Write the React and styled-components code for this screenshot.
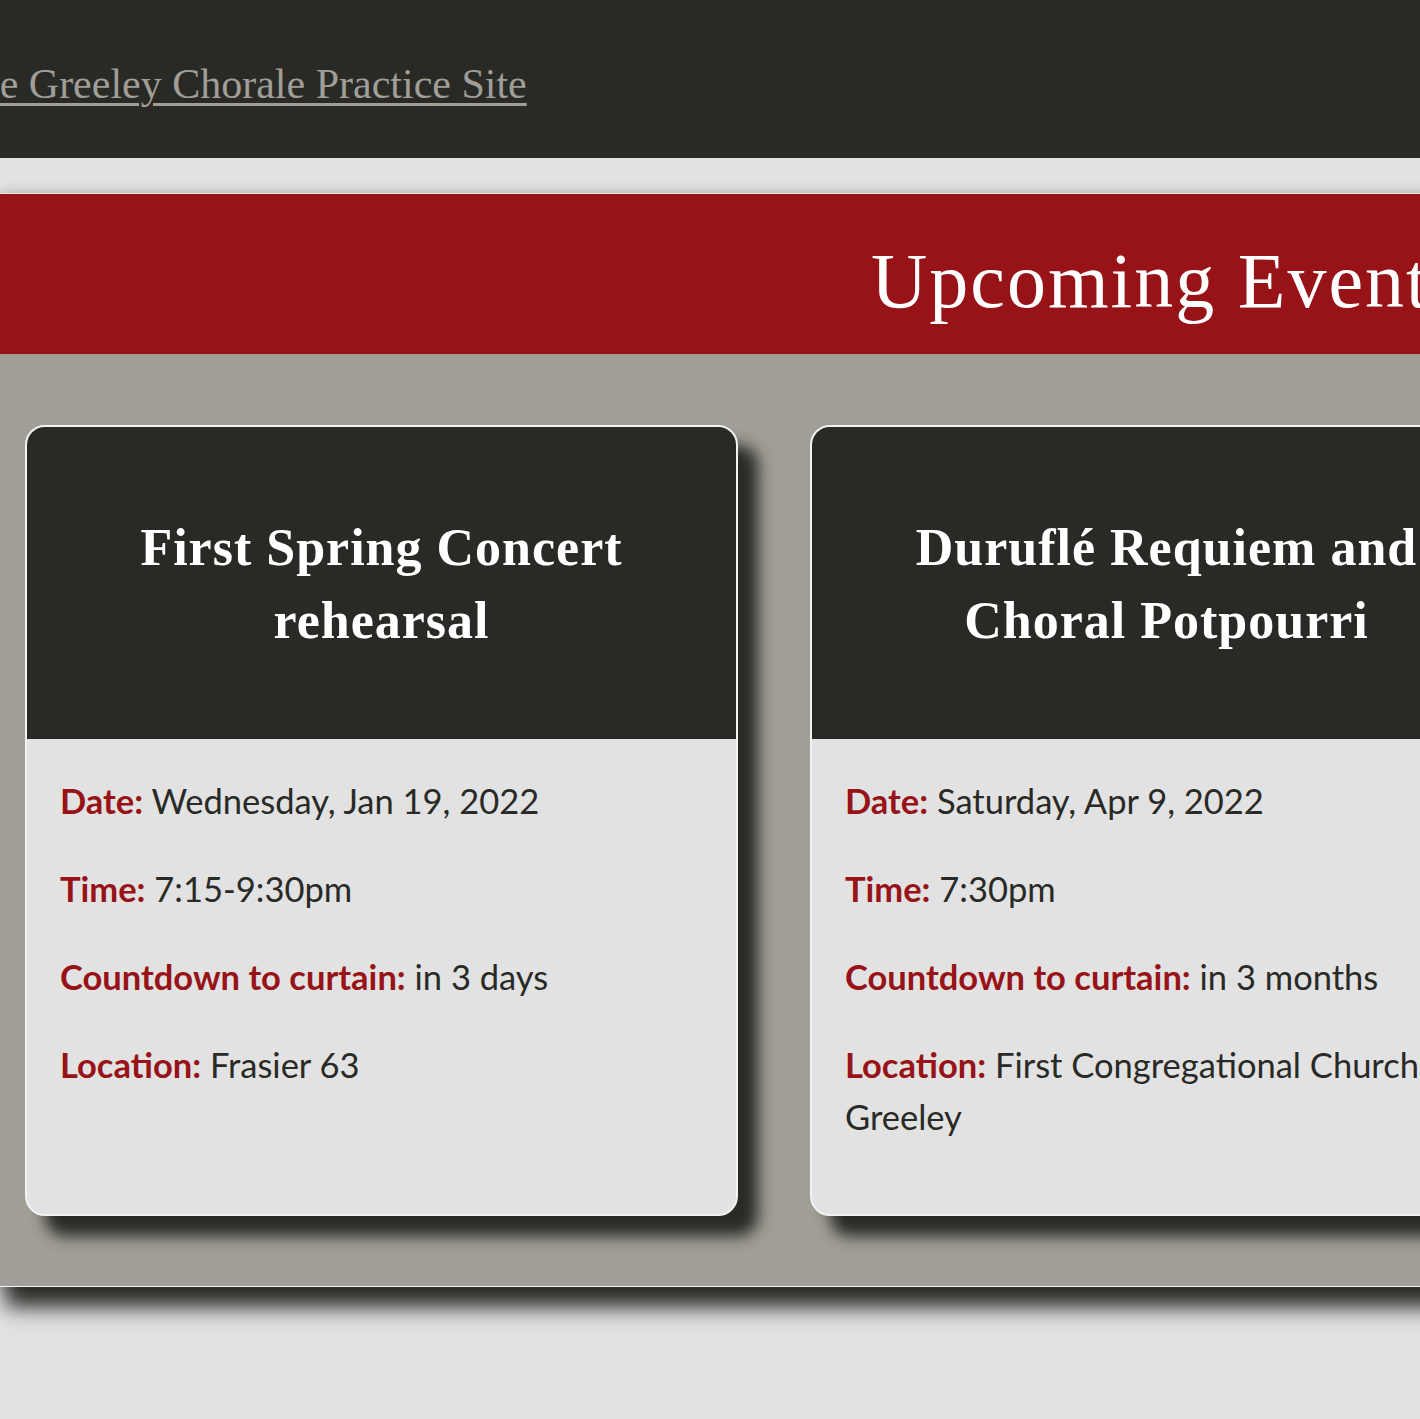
import styled, { createGlobalStyle } from "styled-components";

const GlobalStyle = createGlobalStyle`
  html, body {
    margin: 0;
    padding: 0;
    overflow-x: hidden;
    background-color: #e2e2e2;
  }
  body {
    min-height: 100vh;
    font-family: "Lato", "Open Sans", sans-serif;
  }
`;

// the shot is scrolled sideways a little, so the whole page sits left of the window
const Canvas = styled.div`
  width: 2440px;
  margin-left: -47px;
`;

const Header = styled.header`
  background-color: #292a26;
  padding: 60px 0 50px;
`;

const SiteLink = styled.a`
  font-family: "Liberation Serif", "Times New Roman", serif;
  font-size: 42px;
  line-height: 48px;
  color: #a09e96;
  text-decoration: underline;
  text-decoration-thickness: 3px;
  text-underline-offset: 5px;
`;

const Section = styled.section`
  width: fit-content;
  margin: 35px 0 0 47px;
  border-top: 1px solid #e6e6e6;
  border-bottom: 1px solid #f4f4f4;
  background-color: #a09e96;
  box-shadow: 5px 20px 20px #292a26, 0 0 12px rgba(0, 0, 0, 0.22);
`;

const Banner = styled.h2`
  margin: 0;
  padding: 45px 0 31px;
  background-color: #971318;
  color: #fff;
  text-align: center;
  font-family: "Liberation Serif", "Times New Roman", serif;
  font-size: 78px;
  font-weight: 400;
  letter-spacing: 2px;
  line-height: 84px;
`;

const CardGrid = styled.div`
  display: grid;
  grid-template-columns: repeat(3, 713px);
  column-gap: 72px;
  padding: 71px 25px 70px;
`;

const Card = styled.article`
  display: flex;
  flex-direction: column;
  border: 2px solid #f2f2f2;
  border-radius: 20px;
  overflow: hidden;
  background-color: #e2e2e2;
  box-shadow: 20px 20px 15px #292a26;
`;

const CardTitle = styled.h3`
  margin: 0;
  padding: 84px 36px 82px;
  background-color: #292a26;
  color: #fff;
  text-align: center;
  font-family: "Liberation Serif", "Times New Roman", serif;
  font-size: 52px;
  font-weight: 700;
  letter-spacing: 1px;
  line-height: 73px;
`;

const CardBody = styled.div`
  padding: 0 33px 35px;
`;

const Detail = styled.p`
  margin: 35.5px 0;
  font-size: 34.5px;
  line-height: 52.5px;
  color: #292a26;
`;

const Label = styled.span`
  font-weight: 700;
  color: #971318;
`;

const events = [
  {
    title: "First Spring Concert rehearsal",
    date: "Wednesday, Jan 19, 2022",
    time: "7:15-9:30pm",
    countdown: "in 3 days",
    location: "Frasier 63",
  },
  {
    title: "Duruflé Requiem and Choral Potpourri",
    date: "Saturday, Apr 9, 2022",
    time: "7:30pm",
    countdown: "in 3 months",
    location: "First Congregational Church of Greeley",
  },
];

const EventCard = ({ event }) => (
  <Card>
    <CardTitle>{event.title}</CardTitle>
    <CardBody>
      <Detail>
        <Label>Date:</Label> {event.date}
      </Detail>
      <Detail>
        <Label>Time:</Label> {event.time}
      </Detail>
      <Detail>
        <Label>Countdown to curtain:</Label> {event.countdown}
      </Detail>
      <Detail>
        <Label>Location:</Label> {event.location}
      </Detail>
    </CardBody>
  </Card>
);

const App = () => {
  return (
    <>
      <GlobalStyle />
      <Canvas>
        <Header>
          <SiteLink href="#">The Greeley Chorale Practice Site</SiteLink>
        </Header>
        <Section>
          <Banner>Upcoming Events</Banner>
          <CardGrid>
            {events.map((event) => (
              <EventCard key={event.title} event={event} />
            ))}
          </CardGrid>
        </Section>
      </Canvas>
    </>
  );
};

export default App;
